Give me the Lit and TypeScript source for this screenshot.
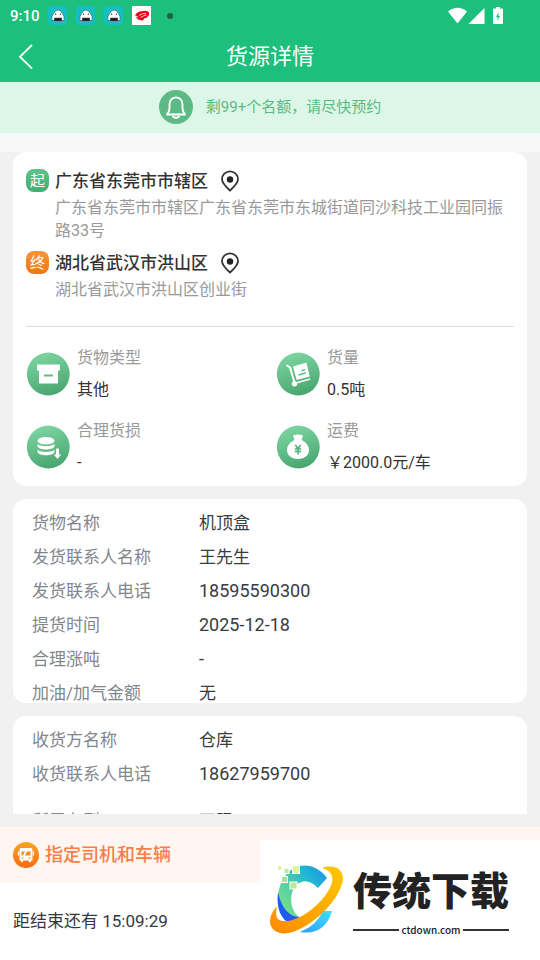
import { LitElement, html, css, svg } from "lit";
import { customElement, property } from "lit/decorators.js";

interface Row {
  label: string;
  value: string;
  numeric?: boolean;
}

const shipmentRows: Row[] = [
  { label: "货物名称", value: "机顶盒" },
  { label: "发货联系人名称", value: "王先生" },
  { label: "发货联系人电话", value: "18595590300", numeric: true },
  { label: "提货时间", value: "2025-12-18", numeric: true },
  { label: "合理涨吨", value: "-", numeric: true },
  { label: "加油/加气金额", value: "无" },
];

const receiverRows: Row[] = [
  { label: "收货方名称", value: "仓库" },
  { label: "收货联系人电话", value: "18627959700", numeric: true },
];

const vehicleRows: Row[] = [{ label: "所需车型", value: "不限" }];

// Glyphs drawn in white on a 44px green disc.
const glyphs = {
  box: svg`
    <path d="M11 12.500h23v6h-2v13H13v-13h-2z" fill="#fff"/>
    <path d="M18 23.500h9" stroke="#5fbf88" stroke-width="2"/>`,
  trolley: svg`
    <path d="M11 13.500l3 2 4.500 15" fill="none" stroke="#fff" stroke-width="2" stroke-linecap="round"/>
    <path d="M17 14.500L30.500 10.500 33.700 24.500 20.700 28z" fill="#fff"/>
    <path d="M19 31.200l15.200-4.200" stroke="#fff" stroke-width="1.700"/>
    <circle cx="18.500" cy="31.800" r="2.700" fill="#fff"/>
    <path d="M25.500 18.700l3.500-1M22.500 23l7.500-2.200" stroke="#5fbf88" stroke-width="1.600"/>`,
  coins: svg`
    <ellipse cx="20" cy="15.800" rx="8.500" ry="3.800" fill="#fff"/>
    <path d="M11.500 18.800c2 3.200 15 3.200 17 0v2.400c-1 4.300-16 4.300-17 0z" fill="#fff"/>
    <path d="M11.500 24.500c2 3.200 15 3.200 17 0v2.400c-1 4.300-16 4.300-17 0z" fill="#fff"/>
    <path d="M31.500 23.500v7" stroke="#fff" stroke-width="2.800"/>
    <path d="M27.800 29.500h7.400l-3.700 4.500z" fill="#fff"/>`,
  bag: svg`
    <path d="M17 10.500q5-2 10 0l-1.500 4.500q7.500 3.500 7.500 10c0 12-22 12-22 0q0-6.500 7.500-10z" fill="#fff"/>
    <path d="M19.300 20l2.700 3.500 2.700-3.500M22 23v6.500M18.800 24h6.400M18.800 26.500h6.400" fill="none" stroke="#4fae78" stroke-width="1.500"/>`,
};

@customElement("cargo-stat")
class CargoStat extends LitElement {
  @property() label = "";
  @property() value = "";
  @property() icon: keyof typeof glyphs = "box";

  static styles = css`
    :host {
      display: flex;
      align-items: center;
      gap: 7px;
      font-size: 16px;
      line-height: 32px;
    }
    .disc {
      width: 44px;
      height: 44px;
      flex: none;
    }
    .label {
      color: #999;
    }
    .value {
      color: #333;
    }
  `;

  render() {
    return html`
      <svg class="disc" viewBox="0 0 44 44" aria-hidden="true">
        <defs>
          <linearGradient id="g" x1="0.3" y1="0" x2="0.6" y2="1">
            <stop offset="0" stop-color="#7dd6a2" />
            <stop offset="1" stop-color="#49a570" />
          </linearGradient>
        </defs>
        <circle cx="22.300" cy="22" r="21.400" fill="url(#g)" />
        ${glyphs[this.icon]}
      </svg>
      <div>
        <div class="label">${this.label}</div>
        <div class="value">${this.value}</div>
      </div>
    `;
  }
}

@customElement("detail-rows")
class DetailRows extends LitElement {
  @property({ attribute: false }) rows: Row[] = [];

  static styles = css`
    :host {
      display: block;
    }
    .list {
      margin: 0;
      font-size: 17px;
      line-height: 20px;
    }
    .row {
      display: grid;
      grid-template-columns: 167px 1fr;
      padding: 14px 19px 0;
    }
    .label {
      color: #83868c;
    }
    .value {
      margin: 0;
      color: #3a3b3f;
    }
    .numeric {
      font-size: 18px;
    }
  `;

  render() {
    return html`
      <dl class="list">
        ${this.rows.map(
          (r) => html`<div class="row">
            <dt class="label">${r.label}</dt>
            <dd class="value ${r.numeric ? "numeric" : ""}">${r.value}</dd>
          </div>`
        )}
      </dl>
    `;
  }
}

@customElement("site-mark")
class SiteMark extends LitElement {
  static styles = css`
    :host {
      display: flex;
      align-items: center;
      gap: 7px;
      box-sizing: border-box;
      width: 280px;
      height: 120px;
      background: #fff;
    }
    .logo {
      width: 86px;
      height: 120px;
      flex: none;
    }
    .name {
      font-size: 39px;
      line-height: 48px;
      font-weight: 900;
      color: #222;
    }
    .words {
      width: 156px;
      padding-top: 12px;
    }
    .domain {
      display: flex;
      align-items: center;
      gap: 2px;
      font: 500 10px/28px "Noto Sans CJK SC", sans-serif;
      color: #222;
    }
    .rule {
      flex: 1;
      height: 2px;
      background: #333;
    }
  `;

  render() {
    return html`
      <svg class="logo" viewBox="0 0 86 120" aria-hidden="true">
        <defs>
          <linearGradient id="c" x1="0" y1="1" x2="1" y2="0">
            <stop offset="0" stop-color="#8ee67c" />
            <stop offset="0.450" stop-color="#4fcfa8" />
            <stop offset="0.700" stop-color="#22b7d4" />
            <stop offset="1" stop-color="#1b8fe8" />
          </linearGradient>
          <linearGradient id="o" x1="0" y1="1" x2="1" y2="0">
            <stop offset="0" stop-color="#ff8a00" />
            <stop offset="1" stop-color="#ffc800" />
          </linearGradient>
          <linearGradient id="b" x1="0" y1="1" x2="1" y2="0">
            <stop offset="0" stop-color="#2f9df5" />
            <stop offset="1" stop-color="#3fe0ff" />
          </linearGradient>
        </defs>
        <path d="M67 38C56 23 37 21 26 35C14 50 16 72 28 82L40 78C28 69 29 49 39 43Q48 38 58 48Z" fill="url(#c)" />
        <path d="M18 52C16 68 21 80 30 83L40 77C28 77 21 66 18 52Z" fill="#1f5df0" />
        <path d="M40 92Q56 86 63 71H72C68 86 57 95 40 92Z" fill="url(#b)" />
        <path
          d="M62 28C74 24 83 29 83 38C82 56 58 83 33 92C20 96 10 91 10 81Q10 74 17 66C15 75 16 81 24 81C38 82 58 67 67 53C74 43 76 32 62 28Z"
          fill="url(#o)"
        />
        <g stroke="#fff">
          <rect x="17.500" y="25.500" width="4" height="5" fill="#e0f29a" />
          <rect x="24" y="28.500" width="5" height="5" fill="#bdea9a" />
          <rect x="32.500" y="25.500" width="7" height="8" fill="#e0f59a" />
          <rect x="21.500" y="36.500" width="6" height="6" fill="#9fe49a" />
          <rect x="30" y="42" width="7" height="7" fill="#b9ec8f" />
        </g>
      </svg>
      <div class="words">
        <div class="name">传统下载</div>
        <div class="domain"><span class="rule"></span>ctdown.com<span class="rule"></span></div>
      </div>
    `;
  }
}

@customElement("app-root")
class AppRoot extends LitElement {
  static styles = css`
    :host {
      display: flex;
      flex-direction: column;
      position: relative;
      height: 100vh;
      overflow: hidden;
      background: #f1f1f1;
      font-family: Roboto, "Noto Sans CJK SC", sans-serif;
      color: #333;
    }
    .status {
      display: flex;
      align-items: center;
      gap: 9px;
      height: 31px;
      padding: 0 35px 0 10px;
      background: #1cc07c;
      color: #fff;
      font-size: 15px;
      font-weight: 500;
      line-height: 20px;
    }
    .tile {
      width: 19px;
      height: 19px;
      flex: none;
    }
    .time {
      width: 29px;
    }
    .dot {
      width: 6px;
      height: 6px;
      margin-left: 7px;
      border-radius: 50%;
      background: #1d5f48;
    }
    .signals {
      width: 58px;
      height: 18px;
      margin-left: auto;
    }
    .bar {
      display: grid;
      grid-template-columns: 52px 1fr 52px;
      align-items: center;
      height: 51px;
      background: #1cc07c;
      color: #fff;
    }
    .back,
    .pin {
      display: flex;
      padding: 0;
      border: 0;
      background: none;
      color: inherit;
      cursor: pointer;
    }
    .back {
      padding-left: 17px;
    }
    .title {
      margin: 0;
      font-size: 22px;
      line-height: 32px;
      font-weight: 400;
      text-align: center;
    }
    .notice {
      display: flex;
      align-items: center;
      justify-content: center;
      gap: 13px;
      height: 50px;
      padding-bottom: 1px;
      background: #dcf6e7;
      color: #5cba84;
      font-size: 15px;
      line-height: 20px;
    }
    .strip {
      height: 19px;
      background: #f8f8f8;
    }
    .content {
      flex: 1;
      min-height: 0;
      overflow: hidden;
      display: flex;
      flex-direction: column;
      gap: 13px;
      padding: 0 13px;
    }
    .card {
      flex: none;
      background: #fff;
      border-radius: 13px;
    }
    .route {
      padding: 13px 13px 7px;
    }
    .stop {
      display: grid;
      grid-template-columns: 23px 1fr;
      column-gap: 6px;
      align-items: center;
    }
    .stop + .stop {
      margin-top: 5px;
    }
    .badge {
      height: 23px;
      border-radius: 8px;
      background: linear-gradient(#5cc48a, #45ad70);
      color: #fff;
      font-size: 15px;
      line-height: 24px;
      text-align: center;
    }
    .badge.end {
      background: linear-gradient(#f7943a, #f47614);
    }
    .place {
      display: flex;
      align-items: center;
      gap: 12px;
      height: 31px;
    }
    .city {
      margin: 0;
      font-size: 17px;
      line-height: 24px;
      font-weight: 500;
    }
    .address {
      grid-column: 2;
      margin: 0;
      color: #999;
      font-size: 16px;
      line-height: 23px;
    }
    .stats {
      display: grid;
      grid-template-columns: 1fr 1fr;
      gap: 9px 12px;
      margin-top: 25px;
      padding-top: 15px;
      border-top: 1px solid #dcdcdc;
    }
    .details {
      overflow: hidden;
    }
    .more {
      margin-top: 13px;
    }
    .assign {
      display: flex;
      align-items: center;
      gap: 6px;
      height: 56px;
      margin-top: 13px;
      padding: 0 13px;
      background: #fff6f1;
      color: #fa7d45;
      font-size: 18px;
      line-height: 24px;
      font-weight: 500;
    }
    .countdown {
      display: flex;
      align-items: center;
      height: 75px;
      padding: 0 13px 2px;
      background: #fff;
      color: #37383e;
      font-size: 17px;
      line-height: 24px;
    }
    .mark {
      position: absolute;
      right: 0;
      bottom: 0;
    }
  `;

  private renderStop(kind: string, tag: string, city: string, address: string) {
    return html`
      <div class="stop">
        <span class="badge ${kind}">${tag}</span>
        <div class="place">
          <h2 class="city">${city}</h2>
          <button class="pin" aria-label="查看地图">
            <svg width="20" height="22" viewBox="0 0 20 22">
              <path d="M10 20.500C5 16 2 13 2 9.300a8 8 0 0 1 16 0C18 13 15 16 10 20.500z" fill="none" stroke="#333" stroke-width="1.800" />
              <circle cx="10" cy="9.500" r="3.200" fill="#222" />
            </svg>
          </button>
        </div>
        <p class="address">${address}</p>
      </div>
    `;
  }

  private renderRobot() {
    return html`<svg class="tile" viewBox="0 0 19 19" aria-hidden="true">
      <rect width="19" height="19" rx="4" fill="#14bfc4" />
      <path d="M4 14.500Q3 10 6 7Q7 4 10 4T14 7Q17 10 16 14.500z" fill="#fff" stroke="#1b5a5e" stroke-width="0.600" />
      <path d="M6.200 11.800h7.600v3.200H6.200z" fill="#222" />
      <path d="M7 8.200h1.200M11.800 8.200H13" stroke="#222" stroke-width="1.100" />
    </svg>`;
  }

  render() {
    return html`
      <div class="status">
        <span class="time">9:10</span>
        ${[0, 1, 2].map(() => this.renderRobot())}
        <svg class="tile" viewBox="0 0 19 19" aria-hidden="true">
          <rect width="19" height="19" fill="#fff" />
          <path
            d="M3 9.500Q5 5.500 10 5.300Q15 4 17 6.500V9L15 11.500 12 12.500 11 14.500 8 14 4 12.800 7 12 3 11.200 6.500 10.300z"
            fill="#e60012"
          />
          <path d="M7 9.500q3-2.500 7-2M8.500 11.500q3-2 6-2.500" fill="none" stroke="#fff" stroke-width="0.800" />
        </svg>
        <span class="dot"></span>
        <svg class="signals" viewBox="0 0 58 18" fill="#fff" aria-hidden="true">
          <path d="M1 4.500Q10.500-3 20 4.500L10.500 16.500z" />
          <path d="M37.500 1v16H21.500z" />
          <path d="M49 0h4v1.500h2q1 0 1 1V16q0 1-1 1h-8q-1 0-1-1V2.500q0-1 1-1h2z" />
          <path d="M51.500 5.500l-2.500 4.500h1.500v3.500l2.500-4.500h-1.500z" fill="#1cc07c" />
        </svg>
      </div>
      <header class="bar">
        <button class="back" aria-label="返回">
          <svg width="18" height="26" viewBox="0 0 18 26" fill="none" stroke="#fff" stroke-width="1.800">
            <path d="M15 1L3 12.800 15 24.500" />
          </svg>
        </button>
        <h1 class="title">货源详情</h1>
      </header>
      <div class="notice">
        <svg width="34" height="34" viewBox="0 0 34 34" aria-hidden="true">
          <circle cx="17" cy="17" r="17" fill="#5cba84" />
          <path
            d="M8 24.500Q10.500 22 10.500 18V14.500C10.500 5 23.500 5 23.500 14.500V18Q23.500 22 26 24.500z"
            fill="none"
            stroke="#fff"
            stroke-width="1.900"
            stroke-linejoin="round"
          />
          <path d="M14 25.500a3 2.300 0 0 0 6 0" fill="none" stroke="#fff" stroke-width="1.900" />
        </svg>
        <span>剩99+个名额，请尽快预约</span>
      </div>
      <div class="strip"></div>
      <main class="content">
        <section class="card route">
          ${this.renderStop("start", "起", "广东省东莞市市辖区", "广东省东莞市市辖区广东省东莞市东城街道同沙科技工业园同振路33号")}
          ${this.renderStop("end", "终", "湖北省武汉市洪山区", "湖北省武汉市洪山区创业街")}
          <div class="stats">
            <cargo-stat icon="box" label="货物类型" value="其他"></cargo-stat>
            <cargo-stat icon="trolley" label="货量" value="0.5吨"></cargo-stat>
            <cargo-stat icon="coins" label="合理货损" value="-"></cargo-stat>
            <cargo-stat icon="bag" label="运费" value="￥2000.0元/车"></cargo-stat>
          </div>
        </section>
        <section class="card details"><detail-rows .rows=${shipmentRows}></detail-rows></section>
        <section class="card details">
          <detail-rows .rows=${receiverRows}></detail-rows>
          <detail-rows class="more" .rows=${vehicleRows}></detail-rows>
        </section>
      </main>
      <div class="assign">
        <svg width="26" height="26" viewBox="0 0 26 26" aria-hidden="true">
          <defs>
            <linearGradient id="t" x1="0" y1="0" x2="0" y2="1">
              <stop offset="0" stop-color="#fba524" />
              <stop offset="1" stop-color="#f76c14" />
            </linearGradient>
          </defs>
          <circle cx="13" cy="13" r="13" fill="url(#t)" />
          <path d="M8 6h10q1.500 0 1.500 2v10.500H18V20h-2v-1.500h-6V20H8v-1.500H6.500V8Q6.500 6 8 6z" fill="#fff" />
          <path d="M5.500 9.500v4M20.500 9.500v4" stroke="#fff" stroke-width="1.200" />
          <path d="M8.500 9.500h3.500l-2 4H8.500zM14 9.500h3.500v4H12z" fill="#f98a1c" />
          <path d="M8.500 16h2M15.500 16h2" stroke="#f98a1c" stroke-width="1.200" />
        </svg>
        <span>指定司机和车辆</span>
      </div>
      <footer class="countdown">距结束还有 15:09:29</footer>
      <site-mark class="mark"></site-mark>
    `;
  }
}
